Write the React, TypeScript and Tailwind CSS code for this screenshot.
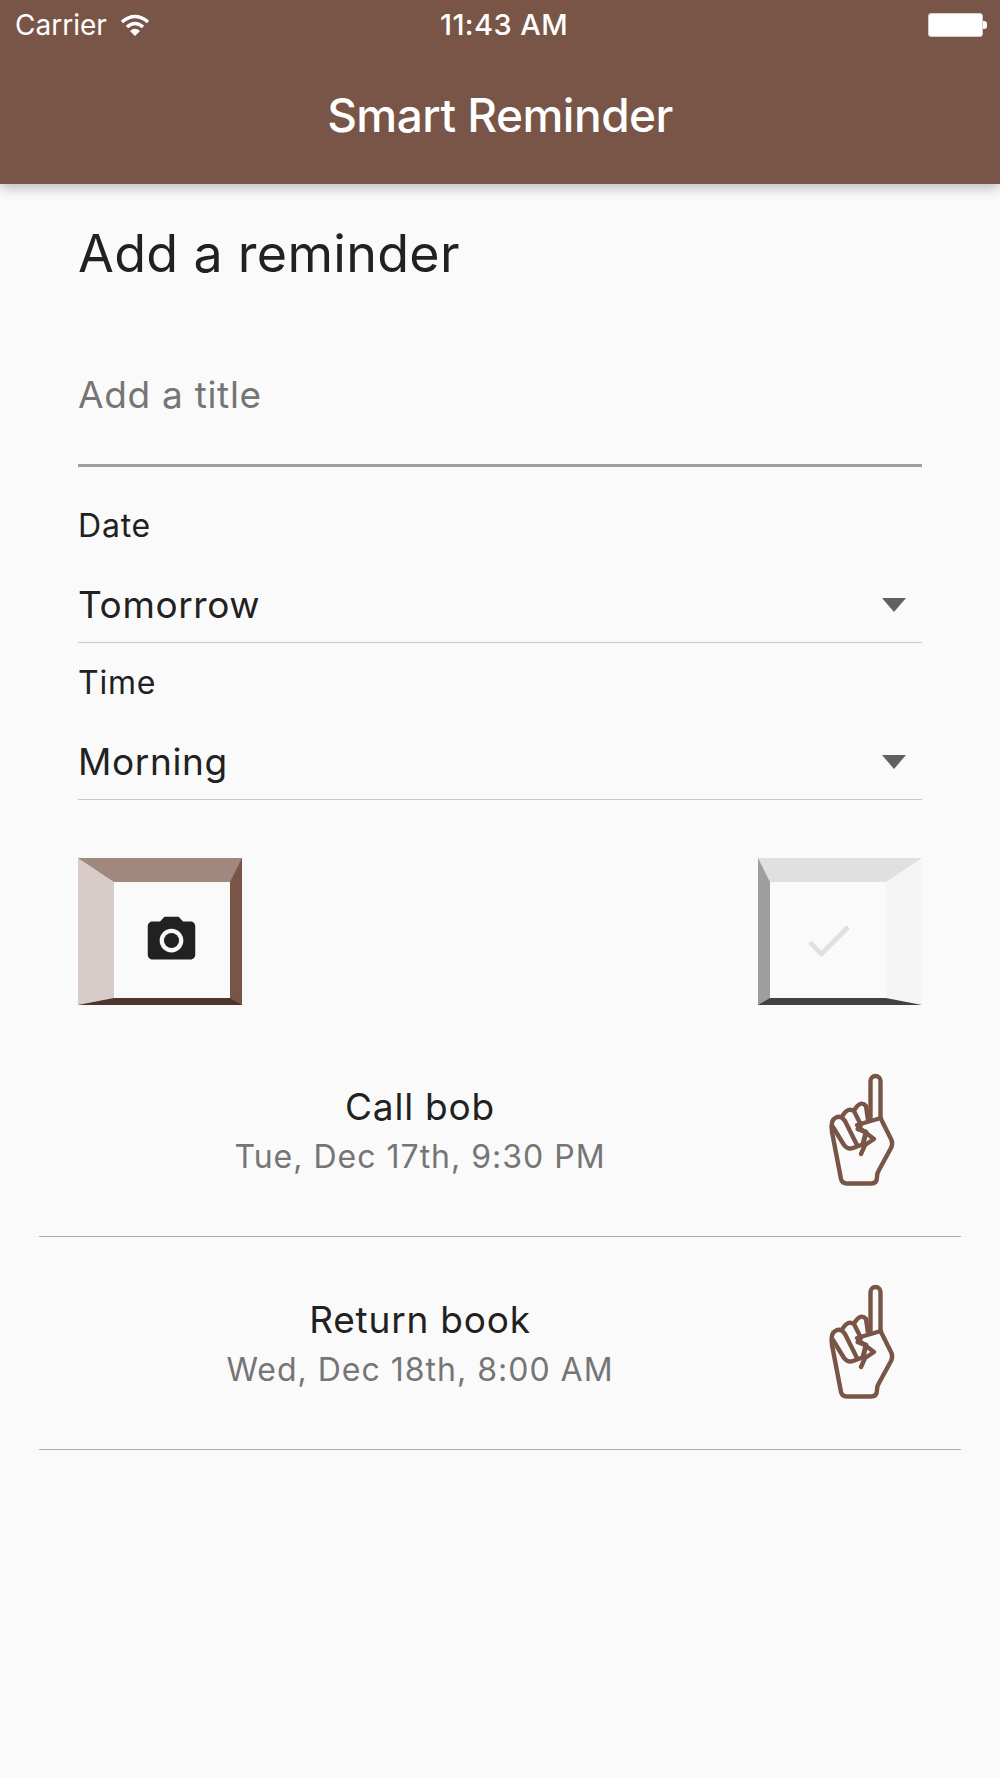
import React from 'react';

const font = { fontFamily: 'Inter, sans-serif' };

function Hand({ tip = 16 }: { tip?: number }) {
  return (
    <svg width="100" height="140" viewBox="0 0 100 140" fill="none" stroke="#795548" strokeWidth="4.4" strokeLinecap="round" strokeLinejoin="round">
      <path d={`M60.500 58 V${tip + 5} a5 5 0 0 1 10 0 V58 L81.500 80 Q83 84 81 88 L69 110 Q67 113 67 117 Q67 123.500 61 123.500 H37 Q32 123.500 31 119 L22 72 Q20 60 26 57.500 Q31 55 35 61 L47 85`} />
      <path d="M23 67 L34 85 Q38 90 43 88 L54 84" />
      <path d="M33 55 Q38 47 44 51 L51 65" />
      <path d="M45 49 Q51 40 56 46 L58 60" />
      <path d="M71 58 L47 65 L52 70 L64 79 L55 85 L51 94" />
      <path d="M48 69 L56 72 L53 84" strokeWidth="5" />
    </svg>
  );
}

function Select({ label, value }: { label: string; value: string }) {
  return (
    <div>
      <div className="h-[76px] pt-[3px] flex items-center text-[32px] tracking-[0.8px] text-[#212121]">{label}</div>
      <div className="h-[81px] flex items-center justify-between border-b border-[#c8c8c8] text-[37px] tracking-[0.6px] text-[#212121]">
        <span className="pt-[6px]">{value}</span>
        <svg className="mr-[16px] mt-[6px]" width="24" height="14" viewBox="0 0 24 14">
          <path d="M0 0 H24 L12 14 Z" fill="#616161" />
        </svg>
      </div>
    </div>
  );
}

function Reminder({ title, when, tip }: { title: string; when: string; tip?: number }) {
  return (
    <div className="h-[213px] flex items-center border-b border-[#bcaaa4]">
      <div className="w-[762px] pt-[4px] text-center">
        <div className="text-[37px] leading-[50px] tracking-[0.8px] text-[#212121]">{title}</div>
        <div className="text-[32px] leading-[50px] tracking-[1px] text-[#757575]">{when}</div>
      </div>
      <div className="ml-[9px] flex">
        <Hand tip={tip} />
      </div>
    </div>
  );
}

export default function App() {
  return (
    <div className="w-[1000px] h-[1778px] bg-[#fafafa] overflow-hidden" style={font}>
      <header className="h-[184px] bg-[#795548] text-white shadow-[0_4px_12px_rgba(0,0,0,0.25)] relative">
        <div className="h-[50px] flex items-center justify-between pl-[15px] pr-[13px] relative">
          <div className="flex items-center gap-[13px]">
            <span className="text-[28px]">Carrier</span>
            <svg width="30" height="22" viewBox="0 0 30 22" fill="none" stroke="#fff" strokeWidth="3.5">
              <path d="M2 8 Q15 -3 28 8" />
              <path d="M7 13 Q15 6 23 13" />
              <path d="M10 17 L15 22 L20 17 Q15 12.500 10 17 Z" fill="#fff" stroke="none" />
            </svg>
          </div>
          <span className="absolute left-[440px] text-[29px] font-medium tracking-[0.4px]">11:43 AM</span>
          <div className="flex items-center">
            <div className="w-[55px] h-[24px] bg-white rounded-[3px] border border-[#d7ccc8]" />
            <div className="w-[4px] h-[8px] bg-white rounded-r-[3px]" />
          </div>
        </div>
        <div className="h-[130px] flex items-center justify-center font-medium text-[46px] tracking-[-0.5px]">Smart Reminder</div>
      </header>

      <main className="px-[78px]">
        <h1 className="h-[140px] flex items-center text-[52px] tracking-[0.3px] text-[#212121]">Add a reminder</h1>
        <div className="h-[143px] border-b-[3px] border-[#9e9e9e] pt-[39px]">
          <input className="w-full h-[62px] text-[37px] tracking-[0.7px] text-[#212121] placeholder:text-[#757575] outline-none bg-transparent" placeholder="Add a title" />
        </div>
        <div className="mt-[19px]">
          <Select label="Date" value="Tomorrow" />
          <Select label="Time" value="Morning" />
        </div>
        <div className="mt-[58px] flex justify-between">
          <button className="w-[164px] h-[147px] flex items-center justify-center border-solid border-t-[24px] border-l-[36px] border-r-[12px] border-b-[7px] border-t-[#a1887f] border-l-[#d7ccc8] border-r-[#795548] border-b-[#4e342e]">
            <svg className="-ml-[2px]" width="57" height="57" viewBox="0 0 24 24" fill="#212121">
              <circle cx="12" cy="12" r="3.2" />
              <path d="M9 2L7.17 4H4c-1.1 0-2 .9-2 2v12c0 1.1.9 2 2 2h16c1.1 0 2-.9 2-2V6c0-1.1-.9-2-2-2h-3.17L15 2H9zm3 15c-2.76 0-5-2.24-5-5s2.24-5 5-5 5 2.24 5 5-2.24 5-5 5z" />
            </svg>
          </button>
          <button className="w-[164px] h-[147px] flex items-center justify-center border-solid border-t-[24px] border-l-[12px] border-r-[36px] border-b-[7px] border-t-[#e0e0e0] border-l-[#9e9e9e] border-r-[#f5f5f5] border-b-[#424242]">
            <svg width="57" height="57" viewBox="0 0 24 24" fill="#e0e0e0">
              <path d="M9 16.170L4.830 12l-1.420 1.410L9 19 21 7l-1.410-1.410z" />
            </svg>
          </button>
        </div>
      </main>

      <section className="mt-[19px] px-[39px]">
        <Reminder title="Call bob" when="Tue, Dec 17th, 9:30 PM" />
        <Reminder title="Return book" when="Wed, Dec 18th, 8:00 AM" tip={14} />
      </section>
    </div>
  );
}
